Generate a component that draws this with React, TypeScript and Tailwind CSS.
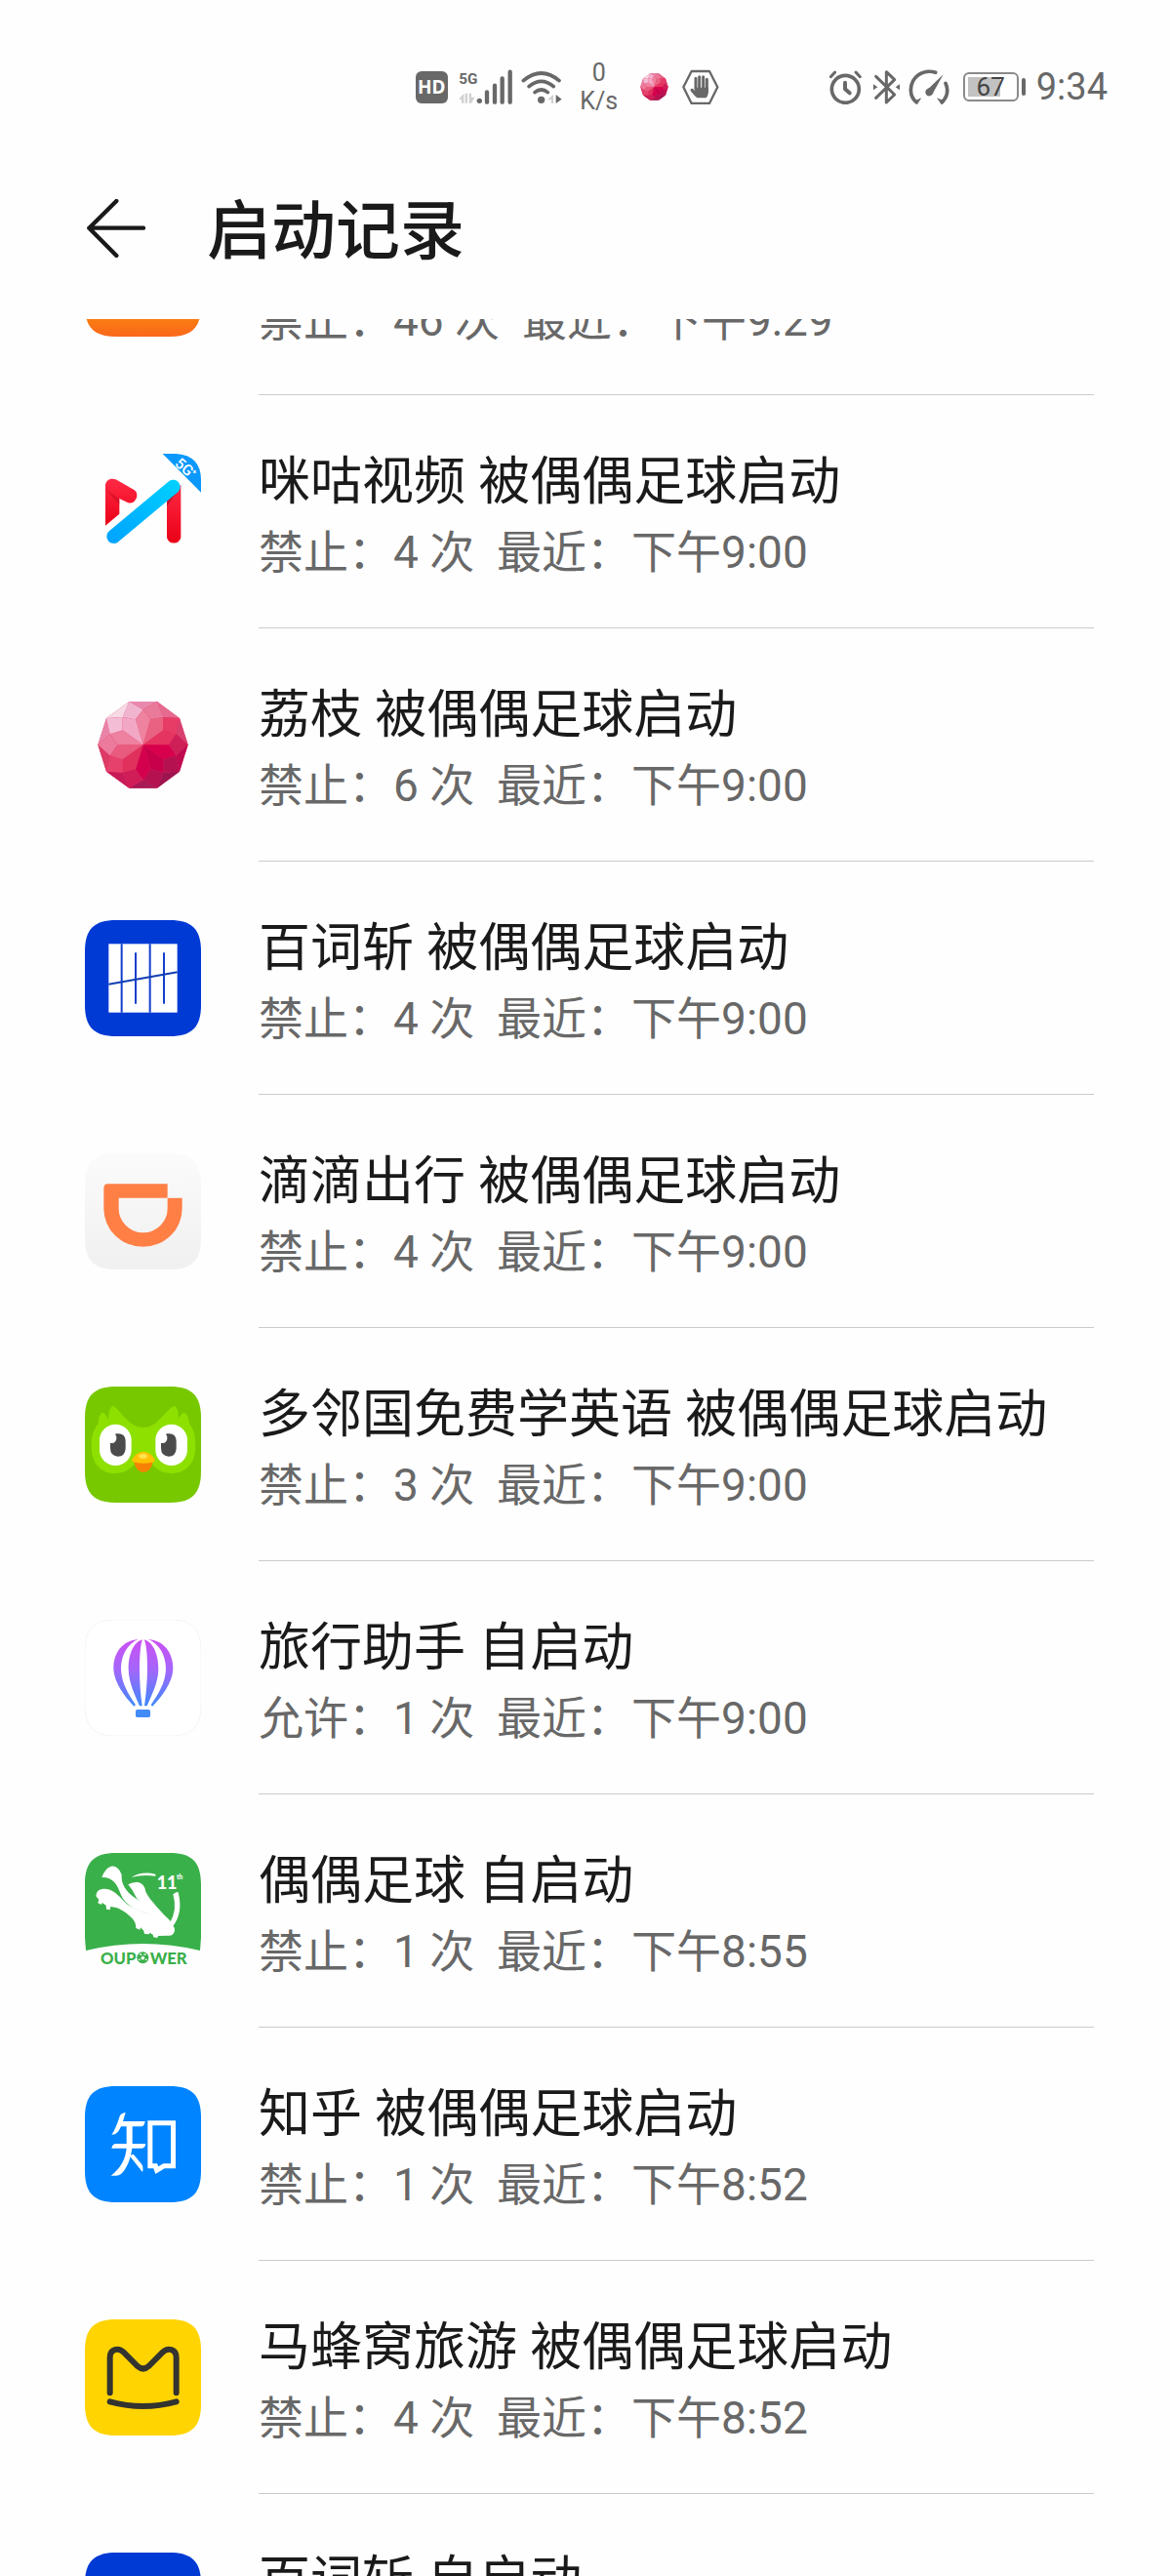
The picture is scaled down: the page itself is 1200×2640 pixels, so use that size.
import React from "react";

/* ---------- Lychee ball: a ten-sided faceted gem ---------- */

const OUTER = [[217, 87], [303, 87], [372, 138], [398, 220], [372, 302], [303, 353], [217, 353], [147, 302], [121, 220], [147, 138]];
const MID = [[260, 112], [322, 135], [361, 187], [361, 253], [322, 305], [260, 328], [197, 305], [158, 253], [158, 187], [197, 135]];
const INNER = [[237, 142], [283, 142], [322, 175], [339, 220], [322, 265], [283, 295], [237, 295], [197, 265], [181, 220], [197, 175]];
const EDGE_FILL = ["#e888ac", "#e66a90", "#d9406f", "#c00a50", "#9c1450", "#a81a55", "#c81a58", "#dc3a66", "#e884a8", "#f6dbe6"];
const RIM_FILL = ["#f0b4cf", "#ea7a9a", "#e63c66", "#cf1f59", "#b51150", "#b51150", "#d01d58", "#e6416c", "#ec7a9c", "#f4bdd6"];
const CORE_FILL = ["#ee829f", "#ea6282", "#e63460", "#d8004c", "#c8004c", "#d4004e", "#e0305c", "#e85a7e", "#ee80a0", "#f2a8c4"];

function pts(...list: number[][]) {
  return list.map((p) => p.join(",")).join(" ");
}

function LycheeFacets() {
  return (
    <>
      <polygon points={pts(...OUTER)} fill="#e0305c" />
      {OUTER.map((v, i) => {
        const next = (i + 1) % 10;
        const prev = (i + 9) % 10;
        return (
          <g key={i}>
            <polygon points={pts(v, OUTER[next], MID[i])} fill={EDGE_FILL[i]} />
            <polygon points={pts(v, MID[prev], INNER[i], MID[i])} fill={RIM_FILL[i]} />
            <polygon points={pts([260, 220], INNER[i], MID[i], INNER[next])} fill={CORE_FILL[i]} />
          </g>
        );
      })}
    </>
  );
}

/* ---------- App icons ---------- */

const TILE = "M0 96C0 28 28 0 96 0H261C329 0 357 28 357 96V261C357 329 329 357 261 357H96C28 357 0 329 0 261Z";

function Tile({ top, fill, stroke }: { top: number; fill: string; stroke?: string }) {
  return <path d={TILE} transform={`translate(81 ${top})`} fill={fill} stroke={stroke} strokeWidth={2} />;
}

function AppSvg({ top, children }: { top: number; children: React.ReactNode }) {
  return (
    <svg viewBox={`81 ${top} 357 357`} className="size-[119px] shrink-0" aria-hidden="true">
      {children}
    </svg>
  );
}

function OrangeIcon() {
  return (
    <AppSvg top={0}>
      <defs>
        <linearGradient id="orange" x1="0" y1="0" x2="0" y2="1">
          <stop offset="0" stopColor="#ffb020" />
          <stop offset="0.85" stopColor="#fb7c12" />
          <stop offset="1" stopColor="#fa661b" />
        </linearGradient>
      </defs>
      <Tile top={0} fill="url(#orange)" />
    </AppSvg>
  );
}

function MiguIcon() {
  return (
    <AppSvg top={105}>
      <defs>
        <linearGradient id="mgBlue" x1="0" y1="1" x2="1" y2="0">
          <stop offset="0" stopColor="#00a2ff" />
          <stop offset="1" stopColor="#00d2ff" />
        </linearGradient>
        <linearGradient id="mgRed" x1="0" y1="0" x2="0" y2="1">
          <stop offset="0" stopColor="#ff2a45" />
          <stop offset="1" stopColor="#ea0016" />
        </linearGradient>
      </defs>
      <path d="M320 105H360Q438 110 438 186V224Z" fill="#0a98fb" />
      <g transform="rotate(40 384 145)" fill="#fff" className="font-[Roboto,sans-serif]">
        <text x="358" y="160" fontSize="46" fontWeight="500">5G</text>
        <text x="414" y="142" fontSize="22" fontWeight="700">+</text>
      </g>
      <path d="M144 204C144 186 160 178 176 184L232 216Q244 224 240 240Q232 260 214 256L187 243V290L144 326Z" fill="url(#mgRed)" />
      <path d="M146 215L187 245V262Z" fill="#b80a20" opacity="0.45" />
      <path d="M333 240L376 200V362A22 22 0 0 1 333 362Z" fill="url(#mgRed)" />
      <path d="M333 236L374 208L333 268Z" fill="#a81024" opacity="0.6" />
      <path d="M341 188A22 22 0 0 1 369 221L181 378A22 22 0 0 1 153 345Z" fill="url(#mgBlue)" />
    </AppSvg>
  );
}

function LycheeIcon() {
  return (
    <AppSvg top={42}>
      <LycheeFacets />
    </AppSvg>
  );
}

function BaicizhanIcon() {
  return (
    <AppSvg top={69}>
      <Tile top={69} fill="#003ad5" />
      <rect x="154" y="142" width="211" height="211" fill="#fff" />
      <path d="M194 142V353M281 142V353M237 169V326M324 169V326" stroke="#1240cc" strokeWidth="6" />
      <path d="M154 266L365 229" stroke="#1240b4" strokeWidth="6" />
    </AppSvg>
  );
}

function DidiIcon() {
  return (
    <AppSvg top={66}>
      <defs>
        <linearGradient id="didi" x1="0" y1="0" x2="0" y2="1">
          <stop offset="0" stopColor="#fbfbfb" />
          <stop offset="1" stopColor="#f0f0f0" />
        </linearGradient>
      </defs>
      <Tile top={66} fill="url(#didi)" />
      <path d="M152 160H335V203H380V236A120 117 0 0 1 139 236V173Q139 160 152 160ZM185 203V236A75 74 0 0 0 335 236V203Z" fill="#ff7f45" fillRule="evenodd" />
      <path d="M333 202H382" stroke="#f8e6de" strokeWidth="2" />
    </AppSvg>
  );
}

function DuolingoIcon() {
  return (
    <AppSvg top={783}>
      <Tile top={783} fill="#78c800" />
      <path d="M154 888C152 868 158 848 166 842C176 844 188 862 208 882C240 918 280 918 312 882C332 862 346 844 358 842C366 850 370 866 368 884Q376 864 388 863Q400 872 402 898C420 918 422 950 420 984C414 1030 380 1050 348 1050C320 1050 304 1040 290 1024H232C218 1040 200 1050 172 1050C140 1050 108 1030 102 984C100 950 102 918 122 898Q124 870 134 862Q146 868 154 888Z" fill="#8ee000" />
      <rect x="126" y="899" width="98" height="127" rx="49" fill="#fff" />
      <rect x="298" y="899" width="98" height="127" rx="49" fill="#fff" />
      <path d="M177 928Q206 924 206 952V974Q204 998 182 998Q159 996 159 972V956Q174 960 178 944Q180 936 174 930Z" fill="#4b4b4b" />
      <path d="M333 928Q362 924 362 952V974Q360 998 338 998Q315 996 315 972V956Q330 960 334 944Q336 936 330 930Z" fill="#4b4b4b" />
      <path d="M232 1012H290C288 1034 276 1046 261 1046C246 1046 234 1034 232 1012Z" fill="#f78206" />
      <path d="M225 1010Q236 984 261 983Q286 984 297 1010Q294 1018 286 1016Q261 1022 236 1016Q228 1018 225 1010Z" fill="#ffc105" />
      <ellipse cx="260" cy="997" rx="13" ry="8" fill="#ffe14d" />
    </AppSvg>
  );
}

function BalloonIcon() {
  return (
    <AppSvg top={60}>
      <defs>
        <linearGradient id="balloon" gradientUnits="userSpaceOnUse" x1="0" y1="120" x2="0" y2="325">
          <stop offset="0" stopColor="#cb50f4" />
          <stop offset="0.45" stopColor="#a566fb" />
          <stop offset="1" stopColor="#3d88fa" />
        </linearGradient>
      </defs>
      <Tile top={60} fill="#ffffff" stroke="#efefef" />
      <path d="M245 120C196 124 168 162 169 212C172 256 204 296 232 326L237 322C214 286 194 256 192 212C192 168 212 134 245 120Z" fill="url(#balloon)" />
      <path d="M276 120C325 124 353 162 352 212C349 256 317 296 289 326L284 322C307 286 328 256 330 212C330 168 309 134 276 120Z" fill="url(#balloon)" />
      <path d="M258 121C228 130 215 170 215 212C216 256 236 292 249 325H257C252 290 249 252 249 208C249 170 252 134 258 121Z" fill="url(#balloon)" />
      <path d="M263 121C293 130 307 170 307 212C306 256 285 292 272 325H264C269 290 273 252 273 208C273 170 270 134 263 121Z" fill="url(#balloon)" />
      <rect x="237" y="336" width="45" height="24" rx="5" fill="#448bfa" />
    </AppSvg>
  );
}

function OupowerIcon() {
  return (
    <AppSvg top={57}>
      <path d="M81 153C81 85 109 57 177 57H342C410 57 438 85 438 153V318L435 357Q259 315 84 357L81 318Z" fill="#3ab04a" />
      <path d="M133 132Q144 102 162 98Q184 96 194 124C192 150 204 174 236 196C262 212 300 226 322 246C342 262 352 274 350 284C330 262 296 250 256 238C222 226 198 206 188 176C180 152 164 130 133 132Z" fill="#fff" />
      <path d="M214 154Q228 146 244 147Q264 150 268 176C280 204 322 240 354 282C320 254 268 224 240 196Q228 170 214 154Z" fill="#fff" />
      <path d="M115 190Q116 170 134 168C156 164 176 178 196 200C230 240 290 240 330 264Q360 280 357 296Q352 314 336 311L306 312L304 318L292 316L290 308L280 302L278 307L264 306L262 296L252 286L250 293L238 288Q238 268 224 256C204 236 184 224 160 222L158 232L147 230L146 218L134 210L132 216L121 211L124 200Z" fill="#fff" />
      <path d="M224 132Q256 112 298 122V128Q258 122 224 132Z" fill="#fff" />
      <path d="M362 178H368Q384 244 350 284L342 272Q366 232 352 184Z" fill="#fff" />
      <g fill="#fff" fontWeight="900" className="font-[Lato,sans-serif]">
        <text x="302" y="168" fontSize="54">11</text>
        <text x="363" y="138" fontSize="20">th</text>
      </g>
      <g fill="#3ab04a" fontSize="50" fontWeight="900" className="font-[Lato,sans-serif]">
        <text x="238" y="398" textAnchor="end">OUP</text>
        <text x="281" y="398">WER</text>
      </g>
      <circle cx="259" cy="379" r="18" fill="#3ab04a" />
      <path d="M259 374L265 378L263 385H255L253 378Z" fill="#fff" />
      <path d="M249 368L256 370M269 368L262 370M246 384L251 386M272 384L267 386" stroke="#fff" strokeWidth="4" fill="none" />
    </AppSvg>
  );
}

function ZhihuIcon() {
  return (
    <AppSvg top={54}>
      <Tile top={54} fill="#0084ff" />
      <g fill="#fff">
        <path d="M206 135L198 162H266Q264 178 254 178H192C184 196 178 202 163 204Q178 180 188 146Q192 137 206 135Z" />
        <path d="M209 176H227V231H268Q266 245 256 245H226C222 272 214 300 196 320Q184 332 161 329C192 306 206 276 209 245H163Q166 231 176 231H209Z" />
        <path d="M218 268L230 263L255 293Q262 302 258 318Z" />
        <path d="M274 160H360V307H326L298 324L292 307H274ZM289 175V292H303L307 301L322 292H345V175Z" fillRule="evenodd" />
      </g>
    </AppSvg>
  );
}

function MafengwoIcon() {
  return (
    <AppSvg top={771}>
      <Tile top={771} fill="#ffd401" />
      <g fill="none" stroke="#333330" strokeWidth="18" strokeLinecap="round">
        <path d="M158 997V888C158 862 184 856 200 872L243 915Q260 930 277 915L320 872C336 856 362 862 362 888V997" />
        <path d="M158 1024Q260 1052 362 1024" />
      </g>
    </AppSvg>
  );
}

/* ---------- Status bar icons ---------- */

function HdIcon() {
  return (
    <span className="flex size-[33px] items-center justify-center rounded-md bg-[#686868] font-['Noto_Sans',sans-serif] text-[19px] leading-none font-bold text-white">
      HD
    </span>
  );
}

function SignalIcon() {
  return (
    <svg viewBox="210 90 168 108" className="h-9 w-14" aria-hidden="true">
      <text x="211" y="134" fontSize="46" fontWeight="700" fill="#686868" className="font-[Roboto,sans-serif]">5G</text>
      <path d="M210 182L226 164V194H219V182ZM230 164H237V194H230ZM242 164H249V176H260L249 194H242Z" fill="#d0d0d0" />
      <circle cx="274" cy="187" r="8" fill="#686868" />
      <path d="M297 160V191M321 140V191M344 118V191M368 98V191" stroke="#686868" strokeWidth="13" strokeLinecap="round" />
    </svg>
  );
}

function WifiIcon() {
  return (
    <svg viewBox="403 90 126 108" className="h-9 w-[42px]" aria-hidden="true">
      <g fill="none" stroke="#686868" strokeWidth="11" strokeLinecap="round">
        <path d="M410 125Q465 79 520 125" />
        <path d="M427 143Q465 111 503 143" />
        <path d="M445 161Q465 145 485 161" />
      </g>
      <circle cx="465" cy="184" r="11" fill="#686868" />
      <path d="M484 184L502 168V195H496V184Z" fill="#d0d0d0" />
      <path d="M510 168L528 182L510 195Z" fill="#686868" />
    </svg>
  );
}

function BlockedIcon() {
  return (
    <svg viewBox="896 90 114 108" className="h-9 w-[38px]" aria-hidden="true">
      <path d="M925 96H980L1005 145L980 195H925L900 145Z" fill="none" stroke="#686868" strokeWidth="7" strokeLinejoin="round" />
      <path d="M938 118V150M949 113V150M961 113V150M972 121V155" stroke="#686868" strokeWidth="9" strokeLinecap="round" />
      <path d="M934 146H977V160Q976 172 970 178H942Q934 172 922 156Q920 148 928 149L936 156Z" fill="#686868" />
    </svg>
  );
}

function AlarmIcon() {
  return (
    <svg viewBox="88 90 105 108" className="h-9 w-[35px]" aria-hidden="true">
      <g fill="none" stroke="#686868" strokeLinecap="round">
        <circle cx="140" cy="151" r="42" strokeWidth="11" />
        <path d="M95 113L108 99M185 113L172 99" strokeWidth="9" />
        <path d="M139 131V151L153 163" strokeWidth="12" strokeLinejoin="round" />
      </g>
    </svg>
  );
}

function BluetoothIcon() {
  return (
    <svg viewBox="222 90 87 108" className="h-9 w-[29px]" aria-hidden="true">
      <path d="M233 112L290 168L265 192V98L290 122L233 178" fill="none" stroke="#686868" strokeWidth="9" strokeLinecap="round" strokeLinejoin="round" />
      <path d="M225 136L238 145L225 154ZM306 136L293 145L306 154Z" fill="#686868" />
    </svg>
  );
}

function GaugeIcon() {
  return (
    <svg viewBox="334 90 126 108" className="h-9 w-[42px]" aria-hidden="true">
      <path d="M417 100C380 88 342 112 341 154Q342 178 357 190M448 133Q462 166 438 190" fill="none" stroke="#686868" strokeWidth="11" strokeLinecap="round" />
      <path d="M350 188L360 199L374 178ZM446 188L436 200L421 178Z" fill="#686868" />
      <path d="M441 106L411 160C408 176 388 176 386 162C386 152 392 150 398 147Z" fill="#686868" />
    </svg>
  );
}

function Battery() {
  return (
    <div className="flex items-center gap-[3px]" aria-label="67%">
      <div className="flex h-[30px] w-[57px] rounded-md border-2 border-[#8a8a8a] p-[3px]">
        <div className="relative w-full">
          <div className="h-full w-[70%] bg-[#c2c2c2]" />
          <span className="absolute inset-0 flex items-center justify-center text-[26px] leading-none text-[#444]">67</span>
        </div>
      </div>
      <div className="h-[18px] w-1 rounded-sm bg-[#686868]" />
    </div>
  );
}

function StatusBar() {
  return (
    <div className="flex h-[178px] shrink-0 items-center justify-end gap-[112px] pr-[65px] text-[#686868]">
      <div className="flex items-center">
        <HdIcon />
        <div className="ml-[11px]"><SignalIcon /></div>
        <div className="ml-2"><WifiIcon /></div>
        <div className="ml-[18px] flex w-10 flex-col items-center text-[25px] leading-[29px]">
          <span>0</span>
          <span>K/s</span>
        </div>
        <svg viewBox="118 84 283 272" className="ml-[22px] h-7 w-[29px]" aria-hidden="true"><LycheeFacets /></svg>
        <div className="ml-[14px]"><BlockedIcon /></div>
      </div>
      <div className="flex items-center">
        <AlarmIcon />
        <div className="ml-[10px]"><BluetoothIcon /></div>
        <div className="ml-2"><GaugeIcon /></div>
        <div className="ml-[14px]"><Battery /></div>
        <span className="ml-[11px] text-[38px] leading-none">9:34</span>
      </div>
    </div>
  );
}

/* ---------- Records ---------- */

type RecordItem = { icon: React.FC; title: string; detail: string };

const RECORDS: RecordItem[] = [
  { icon: MiguIcon, title: "咪咕视频 被偶偶足球启动", detail: "禁止：4 次  最近：下午9:00" },
  { icon: LycheeIcon, title: "荔枝 被偶偶足球启动", detail: "禁止：6 次  最近：下午9:00" },
  { icon: BaicizhanIcon, title: "百词斩 被偶偶足球启动", detail: "禁止：4 次  最近：下午9:00" },
  { icon: DidiIcon, title: "滴滴出行 被偶偶足球启动", detail: "禁止：4 次  最近：下午9:00" },
  { icon: DuolingoIcon, title: "多邻国免费学英语 被偶偶足球启动", detail: "禁止：3 次  最近：下午9:00" },
  { icon: BalloonIcon, title: "旅行助手 自启动", detail: "允许：1 次  最近：下午9:00" },
  { icon: OupowerIcon, title: "偶偶足球 自启动", detail: "禁止：1 次  最近：下午8:55" },
  { icon: ZhihuIcon, title: "知乎 被偶偶足球启动", detail: "禁止：1 次  最近：下午8:52" },
  { icon: MafengwoIcon, title: "马蜂窝旅游 被偶偶足球启动", detail: "禁止：4 次  最近：下午8:52" },
  { icon: BaicizhanIcon, title: "百词斩 自启动", detail: "禁止：1 次  最近：下午8:52" },
];

function Detail({ children }: { children: React.ReactNode }) {
  return <p className="text-[46px] leading-[64px] whitespace-pre text-[#686868]">{children}</p>;
}

function RecordRow({ icon: Icon, title, detail }: RecordItem) {
  return (
    <li className="flex h-[239px] shrink-0 items-center gap-[59px] pr-[79px] pl-[87px]">
      <Icon />
      <div className="flex h-full flex-1 flex-col justify-center border-b border-[#cbcbcb] pt-1">
        <h2 className="text-[53px] leading-[80px] whitespace-pre text-[#1a1a1a]">{title}</h2>
        <Detail>{detail}</Detail>
      </div>
    </li>
  );
}

export default function App() {
  return (
    <main lang="zh-CN" className="flex h-screen flex-col overflow-hidden bg-[#fefefe] font-[Roboto,'Noto_Sans_CJK_SC',sans-serif]">
      <StatusBar />
      <header className="mb-[37px] flex h-[112px] shrink-0 items-center gap-[63px] pl-[89px]">
        <button type="button" aria-label="返回" className="size-[60px]">
          <svg viewBox="87 72 180 180" className="size-full" aria-hidden="true">
            <path d="M178 78L94 161L178 246M94 161H261" fill="none" stroke="#1a1a1a" strokeWidth="13" strokeLinecap="round" strokeLinejoin="round" />
          </svg>
        </button>
        <h1 className="pt-2 text-[66px] leading-[90px] font-medium text-[#1a1a1a]">启动记录</h1>
      </header>
      <ul className="flex flex-1 flex-col overflow-hidden">
        <li className="flex h-[78px] shrink-0 items-end gap-[59px] overflow-hidden pr-[79px] pl-[87px]">
          <div className="pb-[60px]"><OrangeIcon /></div>
          <div className="flex-1 border-b border-[#cbcbcb] pb-[44px]">
            <Detail>禁止：46 次  最近：下午9:29</Detail>
          </div>
        </li>
        {RECORDS.map((r) => (
          <RecordRow key={r.title} {...r} />
        ))}
      </ul>
    </main>
  );
}
